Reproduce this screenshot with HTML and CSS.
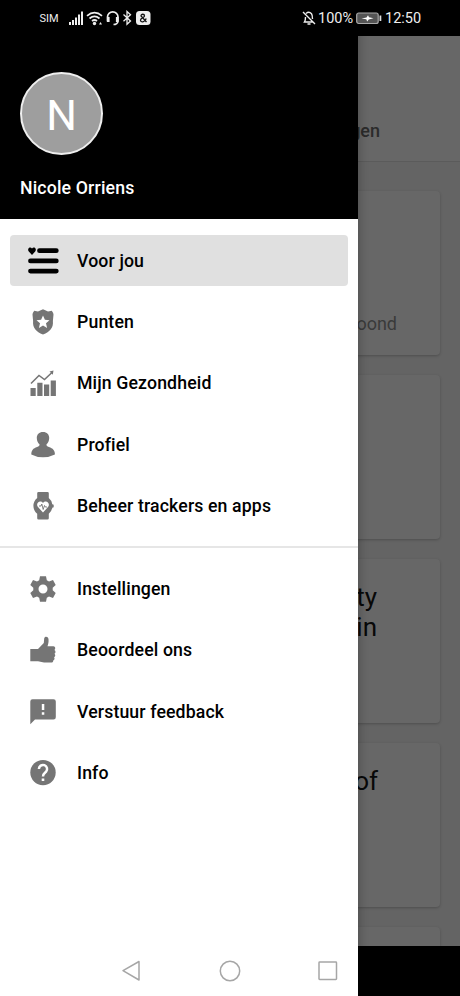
FILE: index.html
```
<!DOCTYPE html>
<html lang="nl">
<head>
<meta charset="utf-8">
<title>Menu</title>
<link rel="stylesheet" href="styles.css">
</head>
<body>
<div class="phone">
  <header class="status">
    <span class="sim">SIM</span>
    <svg class="signals" width="84" height="18" viewBox="0 0 84 18">
      <g fill="#eee"><path d="M1 13h2v3H1zM4 11h2v5H4zM7 8.500h2V16H7zM10 5.500h2V16h-2zM13 2.500h2V16h-2z"/>
      <circle cx="26.500" cy="14.500" r="1.700"/><path d="M31 15.500l1.500-2.500 1.500 2.500z"/></g>
      <g fill="none" stroke="#eee" stroke-width="1.700">
        <path d="M19 6.800Q26.500 0.500 34 6.800M21.500 9.500Q26.500 5.200 31.500 9.500M24 12Q26.500 10 29 12"/>
        <path d="M39.500 12.500V8a5.200 5 0 0 1 10.500 0v4c0 2-2 3.500-4.500 3.500"/>
        <path d="M40.300 8v5M49.200 8v5" stroke-width="2.600"/>
        <path d="M55.500 5.500l7 6.500-3.500 3.300V2.500l3.500 3.300-7 6.500" stroke-width="1.300"/>
      </g>
      <rect x="68" y="2" width="14.500" height="14" rx="3.500" fill="#eee"/>
      <path d="M78.500 13l-5.500-6a1.700 1.700 0 1 1 3.500 0c0 1.500-4 2-4 4.200 0 2.500 4.500 2.300 5.700-1.700" fill="none" stroke="#111" stroke-width="1.300"/>
    </svg>
    <svg class="bell" width="14" height="16" viewBox="0 0 14 16" fill="none" stroke="#eee" stroke-width="1.400">
      <path d="M4 3.500Q7 1 9.500 3.800 10.500 5 10.500 9M11 12H2.500q1-1.500 1-5M1 2l12 12M5.500 14h3"/>
    </svg>
    <span class="percent">100%</span>
    <svg class="battery" width="26" height="13" viewBox="0 0 26 13">
      <rect x=".7" y="1" width="21.500" height="10.500" rx="2" fill="#555" stroke="#aaa" stroke-width="1.200"/>
      <path d="M23.500 3.500h1.800v5.500h-1.800z" fill="#ddd"/>
      <path d="M5.500 6.500L10.500 5.400 12 3.300 13 5.300 17.500 6.200 12.700 7.400 11.200 9.500 10.300 7.300z" fill="#fff"/>
    </svg>
    <span class="clock">12:50</span>
  </header>

  <main class="page">
    <div class="tabs"><span>gen</span></div>
    <div class="cards">
      <section class="card first"><p class="note">oond</p></section>
      <section class="card"></section>
      <section class="card"><h2 class="city">ty<br>in</h2></section>
      <section class="card"><h2>of</h2></section>
      <section class="card"></section>
    </div>
  </main>

  <aside class="drawer">
    <div class="account">
      <div class="avatar"><span>N</span></div>
      <div class="name">Nicole Orriens</div>
    </div>
    <nav class="menu">
      <a class="item active"><svg width="34" height="30" viewBox="0 0 34 30">
        <path d="M13.500 4.700h16.800M4.500 14.900h25.800M4.500 25.100h25.800" stroke="#000" stroke-width="4.800" stroke-linecap="round"/>
        <path d="M6 9L2.800 5.400C.8 3.200 3.800 0 6 2.400 8.200 0 11.200 3.200 9.200 5.400z"/>
      </svg><span>Voor jou</span></a>
      <a class="item"><svg width="34" height="30" viewBox="0 0 34 30">
        <path d="M17 2.300L22 4.400 25.800 3.700Q27.500 6 27.500 7.500L26.900 14C27.500 21 24 24.500 17 27.600 10 24.500 6.500 21 7.100 14L6.500 7.500Q6.500 6 8.200 3.700L12 4.400z"/>
        <path fill="#fff" d="M17 8.500l1.900 4.300 4.600.4-3.500 3.100 1.100 4.600-4.100-2.400-4.100 2.400 1.100-4.600-3.500-3.100 4.600-.4z"/>
      </svg><span>Punten</span></a>
      <a class="item"><svg width="34" height="30" viewBox="0 0 34 30">
        <path d="M4.500 20h5.200v8H4.500zM11.300 14.700h5.200V28h-5.200zM18 16.500h5.200V28H18zM24.700 12.500h5.200V28h-5.200zM23.500 3.500l4-1-.7 4.200z"/>
        <path d="M5 15.500L13 7.500l5.500 4L26.500 4" fill="none" stroke="#757575" stroke-width="1.500"/>
      </svg><span>Mijn Gezondheid</span></a>
      <a class="item"><svg width="34" height="30" viewBox="0 0 34 30">
        <path d="M17 2c4 0 6.200 2.600 6.200 6 0 2.700-1.200 5-2.700 6.300-.2 1.600.7 2 2.400 2.600 4 1.300 6 3.300 6 7.600Q23.500 27.300 17 27.300T5.300 24.500c0-4.300 1.800-6.300 5.800-7.600 1.700-.6 2.600-1 2.400-2.600C12 13 10.800 10.700 10.800 8c0-3.400 2.200-6 6.200-6z"/>
      </svg><span>Profiel</span></a>
      <a class="item"><svg width="34" height="30" viewBox="0 0 34 30">
        <path d="M12.500 1h9q1.300 0 1.300 1.300V7a10 10 0 0 1 3.500 6.200l1.400.5v2.500l-1.400.5a10 10 0 0 1-3.500 6v4.500q0 1.300-1.300 1.300h-9q-1.300 0-1.300-1.300v-4.500a10 10 0 0 1 0-15.700V2.300Q11.200 1 12.500 1z"/>
        <path fill="#fff" d="M17 21.600L11.800 15.800C9.300 12 14.200 8.400 17 12c2.800-3.600 7.700 0 5.200 3.800z"/>
        <path d="M13 15h2l.8-2 1.400 5.500 1.300-4 .8 1.500h1.700" fill="none" stroke="#757575" stroke-width=".9"/>
      </svg><span>Beheer trackers en apps</span></a>
    </nav>
    <nav class="menu second">
      <a class="item"><svg width="34" height="30" viewBox="0 0 34 30">
        <path fill-rule="evenodd" d="M14 2.300h6l.8 4 2.200 1.200 4-1.400 2.700 4.800-3 2.800v2.600l3 2.800-2.700 4.800-4-1.400-2.200 1.200-.8 4h-6l-.8-4-2.200-1.200-4 1.400-2.700-4.800 3-2.800v-2.600l-3-2.800L7 6.100l4 1.400 2.200-1.200zM17 10.500a4.500 4.500 0 1 0 0 9 4.500 4.500 0 1 0 0-9z"/>
      </svg><span>Instellingen</span></a>
      <a class="item"><svg width="34" height="30" viewBox="0 0 34 30">
        <path d="M4.300 14H12l5.800-6 .4-4.500c.3-2.300 3.800-2.400 4.300.5.300 3-.3 5.500-1 7.300h6c2 .2 2.300 2.600.9 3.600 1.500.9 1.400 3 .1 3.800 1.200 1 .9 2.900-.4 3.500.9 1.200.3 2.900-.9 3.300.2 1.300-.6 2.100-2 2.100H18l-6-1.400H4.300z"/>
      </svg><span>Beoordeel ons</span></a>
      <a class="item"><svg width="34" height="30" viewBox="0 0 34 30">
        <path fill-rule="evenodd" d="M6.500 2.200h21q2.300 0 2.300 2.300v15.700q0 2.300-2.300 2.300H9L4.300 27.200V4.500q0-2.300 2.200-2.300zM15.800 7v6h2.500V7zM15.800 15.300v2.500h2.500v-2.500z"/>
      </svg><span>Verstuur feedback</span></a>
      <a class="item"><svg width="34" height="30" viewBox="0 0 34 30">
        <circle cx="17" cy="14.600" r="12.700"/>
        <path d="M12.900 11a4.100 4.100 0 1 1 7.200 2.700c-1.500 1.600-3.100 2-3.100 4.800" fill="none" stroke="#fff" stroke-width="2.500"/>
        <path d="M15.700 20.500h2.600V23h-2.600z" fill="#fff"/>
      </svg><span>Info</span></a>
    </nav>
  </aside>

  <footer class="system-nav">
    <svg width="22" height="24" viewBox="0 0 22 24"><path d="M18 2.500v18.500L2 11.700z"/></svg>
    <svg width="24" height="24" viewBox="0 0 24 24"><circle cx="12" cy="12" r="9.700"/></svg>
    <svg width="22" height="24" viewBox="0 0 22 24"><rect x="2" y="3" width="17.500" height="17.500" rx=".7"/></svg>
  </footer>
</div>
</body>
</html>
```
FILE: styles.css
```
* { box-sizing: border-box; }
body { margin: 0; background: #000; font-family: Roboto, sans-serif; }
.phone { position: relative; width: 460px; height: 996px; overflow: hidden; background: #000; display: flex; flex-direction: column; }

.status { height: 36px; flex: none; display: flex; align-items: center; color: #eee; padding: 0 0 0 39.500px; position: relative; z-index: 3; }
.sim { font-size: 11px; width: 28.500px; }
.bell { margin-left: 150px; }
.percent { font-size: 14.500px; margin-left: 2px; width: 38px; }
.battery { margin: 0 3px 0 0; }
.clock { font-size: 14.500px; }

.page { height: 910px; flex: none; overflow: hidden; background: #646464; }
.tabs { height: 126px; background: #676767; border-bottom: 1.500px solid #5b5b5b; padding: 84px 80px 0 0; text-align: right; font-size: 18px; line-height: 22px; font-weight: 500; color: #2b2b2b; }
.cards { padding: 29px 20px 0; display: flex; flex-direction: column; gap: 20px; }
.card { height: 164px; flex: none; border-radius: 4px; background: #676767; box-shadow: 0 1px 3px rgba(0,0,0,.22); padding-top: 23px; text-align: right; }
.note { margin: 98px 43px 0 0; font-size: 18px; line-height: 24px; color: #3a3a3a; }
.card h2 { margin: 0 62px 0 0; font-size: 26px; line-height: 30px; font-weight: 400; color: #080808; }
.card .city { margin-right: 63px; }

.drawer { position: absolute; left: 0; top: 0; width: 358px; height: 996px; background: #fff; box-shadow: 0 0 10px rgba(0,0,0,.3); }
.account { height: 219px; background: #000; padding: 72px 20px 0; }
.avatar { width: 83px; height: 83px; border-radius: 50%; border: 2px solid #eee; background: #9e9e9e; color: #fff; display: flex; align-items: center; justify-content: center; font-size: 43px; line-height: 1; padding-top: 3px; }
.name { margin-top: 22px; color: #fff; font-size: 17.700px; line-height: 22px; font-weight: 500; letter-spacing: .15px; }
.menu { display: flex; flex-direction: column; gap: 10.400px; padding: 16px 10px 0; height: 327px; }
.second { border-top: 2px solid #e6e6e6; height: auto; padding-top: 15.500px; }
.item { height: 51px; flex: none; border-radius: 4px; display: flex; align-items: center; padding-left: 16px; font-size: 17.700px; font-weight: 500; letter-spacing: .13px; color: #000; }
.item svg { width: 34px; height: 30px; margin-right: 17px; fill: #757575; }
.active { background: #e0e0e0; }
.active svg { fill: #000; }

.system-nav { height: 50px; width: 358px; position: relative; z-index: 2; display: flex; align-items: center; justify-content: space-between; padding: 0 19px 0 121px; }
.system-nav svg { fill: none; stroke: #a6a6a6; stroke-width: 1.500; stroke-linejoin: round; }
```
